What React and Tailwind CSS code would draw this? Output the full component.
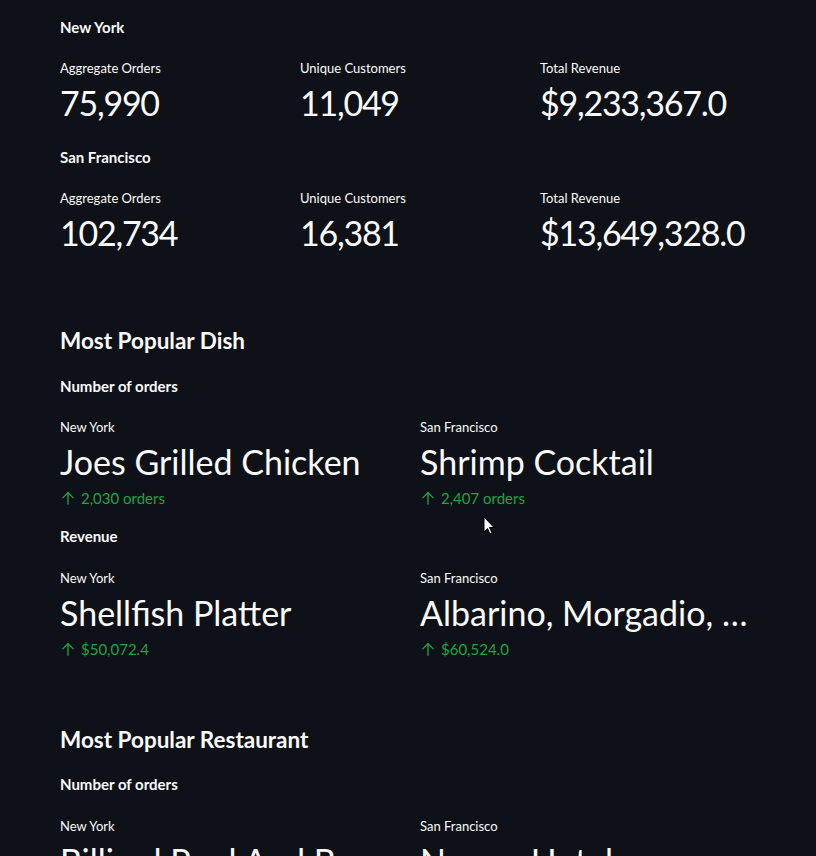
const font = { fontFamily: 'Lato, "Noto Sans", sans-serif' };

function Heading({ children, className = '' }) {
  return <div className={`text-[15px] leading-[24px] font-bold text-[#fafafa] ${className}`}>{children}</div>;
}

function Label({ children }) {
  return <div className="text-[13px] leading-[20px] text-[#fafafa]">{children}</div>;
}

function ArrowUp() {
  return (
    <svg width="16" height="16" viewBox="0 0 24 24" fill="none" stroke="currentColor" strokeWidth="2" strokeLinecap="square">
      <path d="M12 21V4" />
      <path d="M4.5 11.5L12 4l7.5 7.5" />
    </svg>
  );
}

function Metric({ label, value, delta, numeric }) {
  return (
    <div className="min-w-0">
      <Label>{label}</Label>
      <div
        className={`mt-[3px] text-[34px] leading-[44px] text-[#fafafa] whitespace-nowrap overflow-hidden text-ellipsis ${
          numeric ? 'tracking-[-1.25px]' : ''
        }`}
      >
        {value}
      </div>
      {delta && (
        <div className="mt-[2px] flex items-center gap-[5px] text-[15px] leading-[24px] text-[#1fa446]">
          <ArrowUp />
          <span>{delta}</span>
        </div>
      )}
    </div>
  );
}

function Cursor() {
  return (
    <svg className="absolute left-[483px] top-[516px]" width="13" height="19" viewBox="0 0 13 19">
      <path d="M1 1v15l3.5-3.5 2.5 5.5 2-1-2.5-5.5H11z" fill="#fff" stroke="#000" strokeWidth="1" />
    </svg>
  );
}

const cities = [
  { name: 'New York', orders: '75,990', customers: '11,049', revenue: '$9,233,367.0' },
  { name: 'San Francisco', orders: '102,734', customers: '16,381', revenue: '$13,649,328.0' },
];

export default function App() {
  return (
    <div className="relative min-h-screen bg-[#0e1117] overflow-hidden" style={font}>
      <div className="w-[704px] ml-[60px] pt-[15px]">
        {cities.map((c, i) => (
          <div key={c.name} className={i > 0 ? 'mt-[20px]' : ''}>
            <Heading>{c.name}</Heading>
            <div className="mt-[19px] grid grid-cols-3 gap-4">
              <Metric label="Aggregate Orders" value={c.orders} numeric />
              <Metric label="Unique Customers" value={c.customers} numeric />
              <Metric label="Total Revenue" value={c.revenue} numeric />
            </div>
          </div>
        ))}

        <h3 className="mt-[70px] text-[22.5px] leading-[32px] font-bold text-[#fafafa]">Most Popular Dish</h3>
        <Heading className="mt-[17px]">Number of orders</Heading>
        <div className="mt-[19px] grid grid-cols-2 gap-4">
          <Metric label="New York" value="Joes Grilled Chicken" delta="2,030 orders" />
          <Metric label="San Francisco" value="Shrimp Cocktail" delta="2,407 orders" />
        </div>
        <Heading className="mt-[14px]">Revenue</Heading>
        <div className="mt-[20px] grid grid-cols-2 gap-4">
          <Metric label="New York" value="Shellfish Platter" delta="$50,072.4" />
          <Metric label="San Francisco" value="Albarino, Morgadio, Rias Baixas" delta="$60,524.0" />
        </div>

        <h3 className="mt-[63px] text-[22.5px] leading-[32px] font-bold text-[#fafafa]">Most Popular Restaurant</h3>
        <Heading className="mt-[16px]">Number of orders</Heading>
        <div className="mt-[20px] grid grid-cols-2 gap-4">
          <Metric label="New York" value="Billiard Pool And Bar Lounge" delta="3,112 orders" />
          <Metric label="San Francisco" value="Norma Hotel" delta="2,884 orders" />
        </div>
      </div>
      <Cursor />
    </div>
  );
}
